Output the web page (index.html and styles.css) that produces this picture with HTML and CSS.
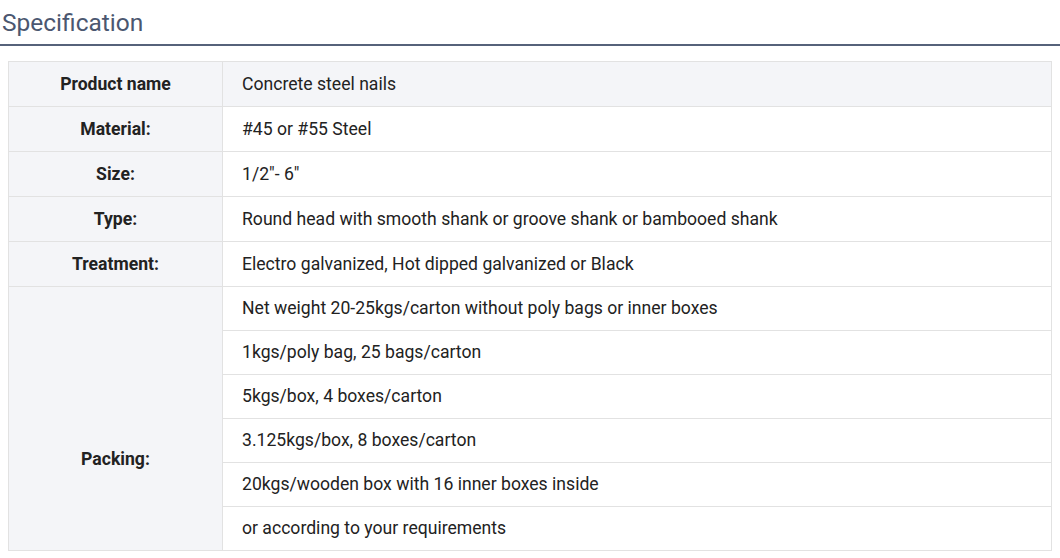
FILE: index.html
```html
<!DOCTYPE html>
<html>
<head>
<meta charset="utf-8">
<link rel="stylesheet" href="styles.css">
</head>
<body>
<h2 class="title">Specification</h2>
<table class="spec">
  <tr class="head"><th>Product name</th><td>Concrete steel nails</td></tr>
  <tr><th>Material:</th><td>#45 or #55 Steel</td></tr>
  <tr><th>Size:</th><td>1/2"- 6"</td></tr>
  <tr><th>Type:</th><td>Round head with smooth shank or groove shank or bambooed shank</td></tr>
  <tr><th>Treatment:</th><td>Electro galvanized, Hot dipped galvanized or Black</td></tr>
  <tr class="pk"><th rowspan="6" class="packing">Packing:</th><td>Net weight 20-25kgs/carton without poly bags or inner boxes</td></tr>
  <tr class="pk"><td>1kgs/poly bag, 25 bags/carton</td></tr>
  <tr class="pk"><td>5kgs/box, 4 boxes/carton</td></tr>
  <tr class="pk"><td>3.125kgs/box, 8 boxes/carton</td></tr>
  <tr class="pk"><td>20kgs/wooden box with 16 inner boxes inside</td></tr>
  <tr class="pk"><td>or according to your requirements</td></tr>
</table>
</body>
</html>
```
FILE: styles.css
```css
html, body {
  margin: 0;
  padding: 0;
  background: #fff;
  font-family: Roboto, "Liberation Sans", sans-serif;
}
.title {
  margin: 0;
  padding: 2px 0 0 2px;
  font-size: 24.5px;
  font-weight: 400;
  line-height: 42px;
  height: 42px;
  color: #4b5770;
  border-bottom: 2px solid #56627a;
}
.spec {
  margin: 15px 0 0 8px;
  width: 1044px;
  border-collapse: collapse;
  font-size: 17.6px;
  color: #222;
}
.spec th, .spec td {
  border: 1px solid #e2e2e2;
  padding: 0;
  line-height: 44px;
  height: 44px;
}
.spec th {
  width: 213px;
  background: #f4f5f8;
  font-weight: 700;
  text-align: center;
}
.spec th.packing {
  padding-top: 80px;
}
.spec td {
  text-align: left;
  padding-left: 19px;
}
.spec tr.head td {
  background: #f4f5f8;
}
.spec tr.pk td {
  line-height: 43px;
  height: 43px;
}
```
